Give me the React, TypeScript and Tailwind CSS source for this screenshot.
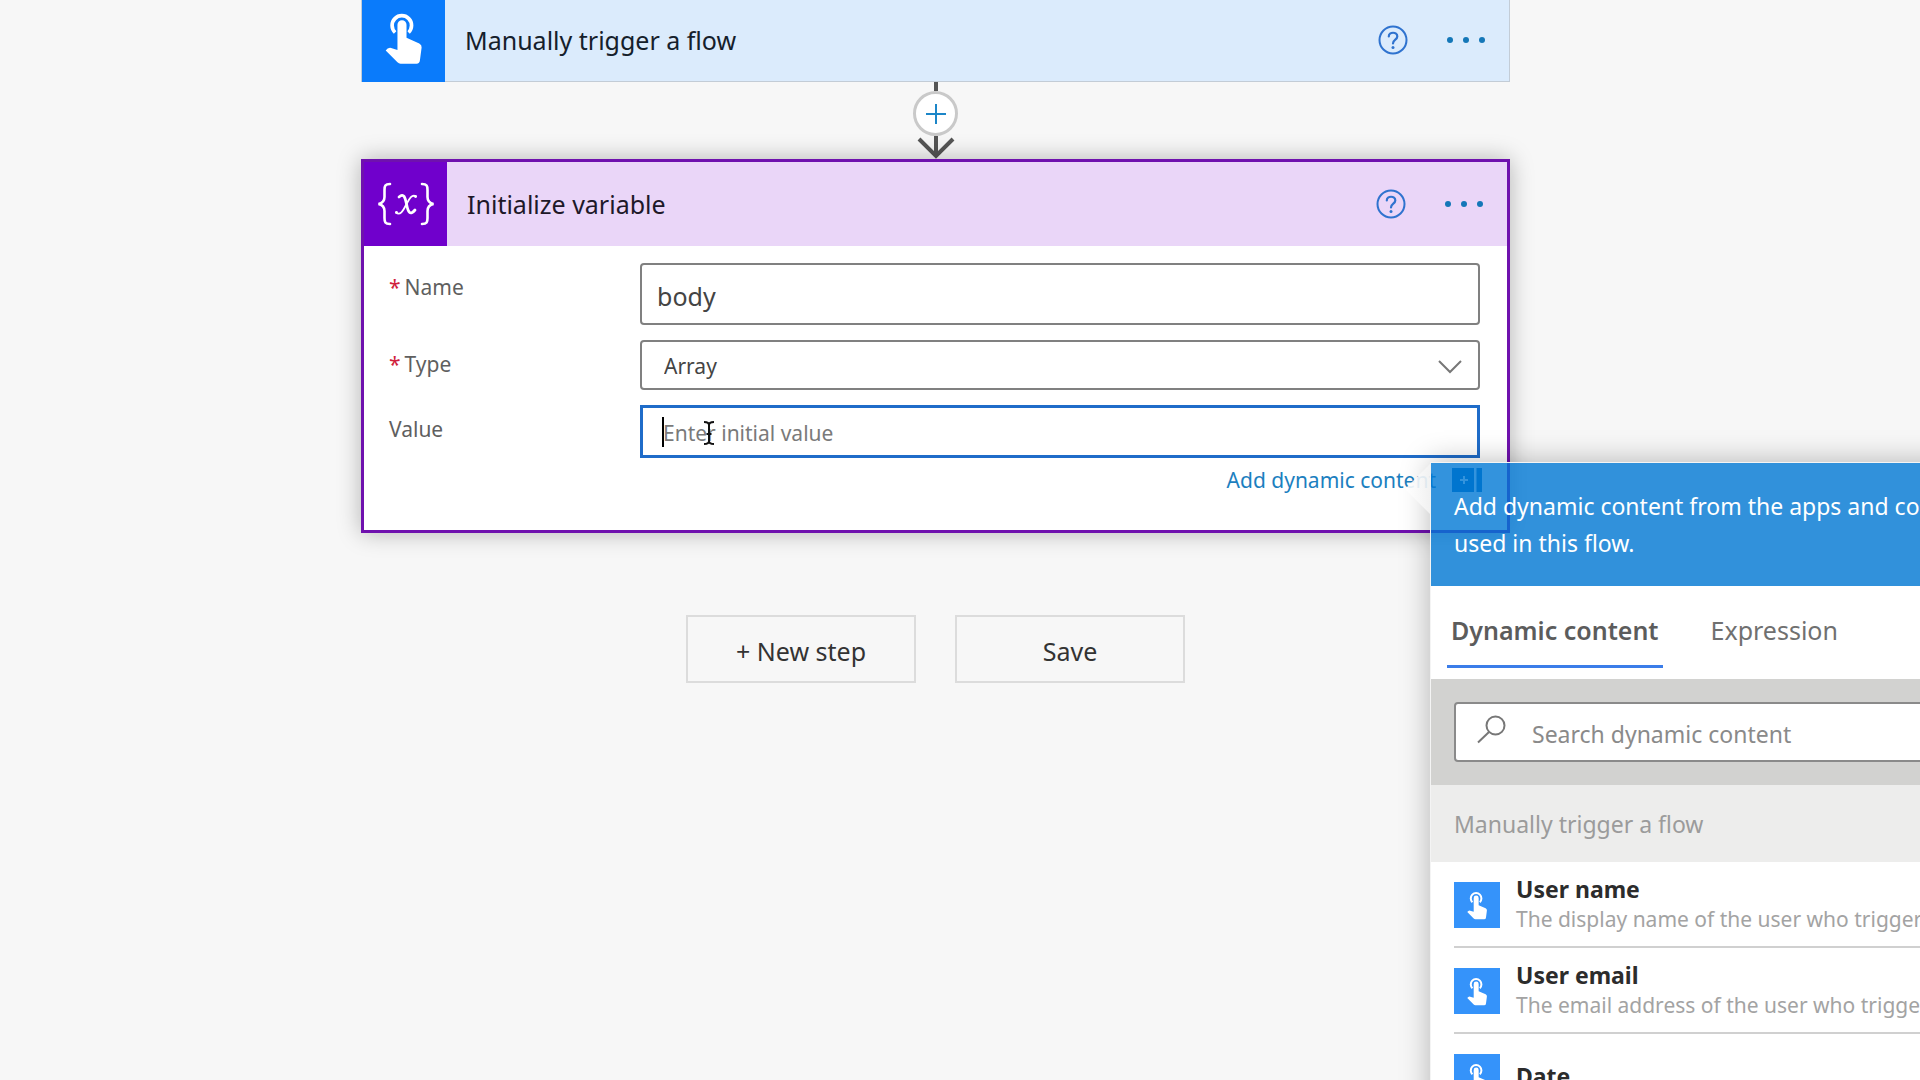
import React from "react";

function TouchIcon({ className }: { className: string }) {
  return (
    <svg viewBox="110 38 116 158" className={className} aria-hidden="true">
      <path d="M143 99 A29 29 0 1 1 183 99" fill="none" stroke="#fff" strokeWidth="11" />
      <path
        d="M150 76 a13.5 13.5 0 0 1 27 0 V115 L215 132 q8 4 7 12 L217 182 q-1 10 -10 10 H159 q-5 0 -9 -4 L115 153 q6 -10 16 -8 L150 151 Z"
        fill="#fff"
        stroke="currentColor"
        strokeWidth="5"
        paintOrder="stroke"
      />
    </svg>
  );
}

function VariableIcon() {
  return (
    <svg viewBox="0 0 60 44" className="w-15 h-11" fill="none" stroke="#fff" strokeLinecap="round" aria-hidden="true">
      <path d="M14 2 C9 2 8.500 4 8.500 8 V15 C8.500 19 7 21 2.500 22 C7 23 8.500 25 8.500 29 V36 C8.500 40 9 42 14 42" strokeWidth="2.600" />
      <path d="M46 2 C51 2 51.500 4 51.500 8 V15 C51.500 19 53 21 57.500 22 C53 23 51.500 25 51.500 29 V36 C51.500 40 51 42 46 42" strokeWidth="2.600" />
      <path d="M23 15 C28 11 29 15 30.500 22 C32 30 34 34 39 28" strokeWidth="2.800" />
      <path d="M40 14.500 C35 11 32 20 30 23 C27 29 24 34 20 30.500" strokeWidth="1.800" />
      <circle cx="39.500" cy="14.500" r="1.400" fill="#fff" stroke="none" />
      <circle cx="20.500" cy="30.500" r="1.400" fill="#fff" stroke="none" />
    </svg>
  );
}

function CardActions() {
  return (
    <div className="flex items-center gap-9 pr-[22px]">
      <button aria-label="Help" className="size-8 flex items-center justify-center text-[#2f73cf]">
        <svg viewBox="0 0 32 32" className="size-8" fill="none" stroke="currentColor" strokeLinecap="round">
          <circle cx="16" cy="16" r="13.500" strokeWidth="2" />
          <path d="M11.800 12.500 C11.800 7.500 20.300 7.500 20.300 12.500 C20.300 15.700 16 15.700 16 19.500" strokeWidth="2.200" />
          <circle cx="16" cy="23.500" r="1.500" fill="currentColor" stroke="none" />
        </svg>
      </button>
      <button aria-label="More commands" className="flex items-center gap-2.5 h-8 px-0.5">
        <span className="size-1.5 rounded-full bg-[#1477b8]" />
        <span className="size-1.5 rounded-full bg-[#1477b8]" />
        <span className="size-1.5 rounded-full bg-[#1477b8]" />
      </button>
    </div>
  );
}

function Label({ id, text, required }: { id: string; text: string; required?: boolean }) {
  return (
    <label htmlFor={id} className="w-[251px] shrink-0 pt-2 text-[21px] leading-8 text-[#5f5f5f]">
      {required && <span className="mr-1 text-[#d0213c]">*</span>}
      {text}
    </label>
  );
}

function Connector() {
  return (
    <div className="flex flex-col items-center">
      <span className="h-[9px] w-1 bg-[#555]" />
      <button
        aria-label="Insert a new step"
        className="size-[45px] rounded-full border-3 border-[#c9c9c9] bg-white flex items-center justify-center"
      >
        <svg viewBox="0 0 20 20" className="size-5" stroke="#1c86c8" strokeWidth="2" aria-hidden="true">
          <path d="M10 0 V20 M0 10 H20" />
        </svg>
      </button>
      <svg viewBox="0 0 40 23" className="w-10 h-[23px]" fill="none" stroke="#555" strokeWidth="4" aria-hidden="true">
        <path d="M20 0 V20 M3 3 L20 20 L37 3" />
      </svg>
    </div>
  );
}

const items = [
  { name: "User name", description: "The display name of the user who triggered the flow" },
  { name: "User email", description: "The email address of the user who triggered the flow" },
  { name: "Date", description: "" },
];

function DynamicContentPanel() {
  return (
    <aside className="absolute left-[1066px] top-[300px] z-10 w-[660px] border border-[#f4f4f4] shadow-[0_0_28px_rgba(0,0,0,0.28)]">
      <svg viewBox="0 0 26 52" className="absolute right-full top-0 w-[26px] h-[52px]" aria-hidden="true">
        <defs>
          <linearGradient id="beak" x1="0" x2="1" y1="0" y2="0">
            <stop offset="0" stopColor="#fff" />
            <stop offset="1" stopColor="#f3f3f3" />
          </linearGradient>
        </defs>
        <path d="M26 0 L0 26 L26 52 Z" fill="url(#beak)" fillOpacity="0.9" />
      </svg>
      <p className="h-[123px] bg-[#0078d4]/80 pl-[23px] pr-5 pt-[25px] text-[23px] leading-[37px] text-white">
        Add dynamic content from the apps and connectors
        <br />
        used in this flow.
      </p>
      <div role="tablist" className="flex gap-10 bg-white pb-[11px] pl-4 pt-3.5 text-[25px]">
        <button role="tab" aria-selected="true" className="border-b-3 border-[#3b7de9] px-1 pb-[17px] pt-3 leading-9 font-semibold text-[#5c5c5c]">
          Dynamic content
        </button>
        <button role="tab" aria-selected="false" className="border-b-3 border-transparent px-2 pb-[17px] pt-3 leading-9 text-[#707070]">
          Expression
        </button>
      </div>
      <div className="bg-[#d2d2d0] px-[23px] py-[23px]">
        <div className="flex h-[60px] items-center rounded-sm border-2 border-[#8a8a8a] bg-white pl-5">
          <svg viewBox="0 0 30 30" className="mb-1.5 size-[30px]" fill="none" stroke="#777" strokeWidth="2" aria-hidden="true">
            <circle cx="19.500" cy="11.500" r="9" />
            <path d="M13 18 L2 28.500" />
          </svg>
          <input
            aria-label="Search dynamic content"
            placeholder="Search dynamic content"
            className="ml-[26px] mt-1 min-w-0 flex-1 bg-transparent text-[23px] outline-none placeholder:text-[#8a8a8a]"
          />
        </div>
      </div>
      <h2 className="bg-[#ededec] pl-[23px] pt-[21px] pb-5 text-[23px] leading-9 text-[#9b9b9b]">Manually trigger a flow</h2>
      <ul className="bg-white pl-[23px]">
        {items.map((item) => (
          <li key={item.name} className="flex h-[86px] items-start gap-4 border-b-2 border-[#d0d0d0] pt-5">
            <span className="flex size-[46px] shrink-0 items-center justify-center bg-[#3593fa] text-[#3593fa]">
              <TouchIcon className="h-[29px] w-[22px]" />
            </span>
            <span className="flex min-h-[60px] flex-col justify-center whitespace-nowrap -mt-2">
              <b className="text-[23px] leading-[30px] text-[#2c2c2c]">{item.name}</b>
              {item.description && <span className="text-[21px] leading-[30px] text-[#a3a3a3]">{item.description}</span>}
            </span>
          </li>
        ))}
      </ul>
    </aside>
  );
}

export default function App() {
  return (
    <div className="relative h-screen overflow-hidden bg-[#f7f7f7] pr-[49px] font-['Noto_Sans',sans-serif] text-[#333]">
      <main className="mx-auto flex w-full max-w-[1149px] flex-col">
        <section className="flex h-[82px] items-center border border-t-0 border-[#c3ccd6] bg-[#dbebfc] pb-0.5">
          <span className="-mb-0.5 flex h-[82px] w-[83px] items-center justify-center bg-[#0a7bfb] pb-1 text-[#0a7bfb]">
            <TouchIcon className="h-[53px] w-[39px]" />
          </span>
          <h2 className="flex-1 pl-5 text-[25px] leading-9 text-[#15202b]">Manually trigger a flow</h2>
          <CardActions />
        </section>

        <Connector />

        <section className="relative border-3 border-[#6f11ae] bg-white shadow-[0_0_22px_rgba(0,0,0,0.28)]">
          <header className="flex h-[84px] items-center bg-[#ead6f8]">
            <span className="flex h-full w-[83px] items-center justify-center bg-[#7000cc]">
              <VariableIcon />
            </span>
            <h2 className="flex-1 pl-5 text-[25px] leading-9 text-[#201828]">Initialize variable</h2>
            <CardActions />
          </header>

          <div className="flex flex-col pb-[34px] pl-[25px] pr-[27px] pt-[17px]">
            <div className="flex">
              <Label id="name" text="Name" required />
              <input
                id="name"
                defaultValue="body"
                className="h-[62px] min-w-0 flex-1 rounded-sm border-2 border-[#808080] px-[15px] pt-1 text-[25px] text-[#444] outline-none"
              />
            </div>
            <div className="mt-[15px] flex">
              <Label id="type" text="Type" required />
              <div className="relative min-w-0 flex-1">
                <select
                  id="type"
                  defaultValue="Array"
                  className="h-[50px] w-full appearance-none rounded-sm border-2 border-[#808080] bg-white px-[22px] pt-1 text-[21px] text-[#444] outline-none"
                >
                  <option>Array</option>
                </select>
                <svg viewBox="0 0 24 14" className="pointer-events-none absolute right-[18px] top-5 h-3.5 w-6" fill="none" stroke="#777" strokeWidth="2" aria-hidden="true">
                  <path d="M1 1 L12 12 L23 1" />
                </svg>
              </div>
            </div>
            <div className="mt-[15px] flex">
              <Label id="value" text="Value" />
              <div className="relative min-w-0 flex-1">
                <input
                  id="value"
                  placeholder="Enter initial value"
                  className="h-[53px] w-full border-3 border-[#1f6cc9] px-5 pt-0.5 text-[21px] outline-none placeholder:text-[#7a7a7a]"
                />
                <span className="absolute left-[22px] top-3 h-[30px] w-0.5 bg-black" />
                <svg viewBox="0 0 12 24" className="absolute left-[63px] top-4 h-6 w-3" fill="none" stroke="#111" strokeWidth="2" aria-hidden="true">
                  <path d="M1 1 C4 1 6 2 6 4 C6 2 8 1 11 1 M6 3 V21 M1 23 C4 23 6 22 6 20 C6 22 8 23 11 23 M3.500 13 H8.500" />
                </svg>
              </div>
            </div>
            <div className="mt-1.5 -mr-0.5 flex h-8 items-center justify-end">
              <a href="#dynamic" className="flex items-center gap-4 text-[21px] leading-8 text-[#1c80bf]">
                Add dynamic content
                <svg viewBox="0 0 30 24" className="h-6 w-[30px]" aria-hidden="true">
                  <path d="M0 0 H22 V24 H0 Z M24.500 0 H30 V24 H24.500 Z" fill="#0067b8" />
                  <path d="M12 8 V16 M8 12 H16" stroke="#fff" strokeWidth="2" />
                </svg>
              </a>
            </div>
          </div>
          <DynamicContentPanel />
        </section>

        <div className="mt-[82px] flex justify-center gap-[39px]">
          <button className="h-[68px] w-[230px] border-2 border-[#dcdcdc] pt-1.5 text-[25px]">+ New step</button>
          <button className="h-[68px] w-[230px] border-2 border-[#dcdcdc] pt-1.5 text-[25px]">Save</button>
        </div>
      </main>
    </div>
  );
}
